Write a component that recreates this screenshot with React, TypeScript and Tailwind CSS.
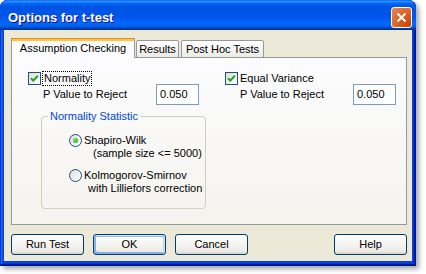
import type { ReactNode } from 'react';

const font = { fontFamily: '"Liberation Sans", Arial, sans-serif' };

function Checkbox({ checked }: { checked: boolean }) {
  return (
    <span className="flex h-[13px] w-[13px] shrink-0 items-center justify-center border border-[#1C5180] bg-[linear-gradient(135deg,#DCDCD7,#ffffff)]">
      {checked && (
        <svg width="11" height="11" viewBox="0 0 11 11">
          <path d="M2 5.2 L4.3 7.6 L8.8 2.8" fill="none" stroke="#21A121" strokeWidth="2" />
        </svg>
      )}
    </span>
  );
}

function Radio({ checked }: { checked: boolean }) {
  return (
    <span className="flex h-[13px] w-[13px] shrink-0 items-center justify-center rounded-full border border-[#1C5180] bg-[linear-gradient(135deg,#DCDCD7,#ffffff)]">
      {checked && (
        <span className="h-[5px] w-[5px] rounded-full bg-[radial-gradient(circle_at_35%_35%,#7BE05A,#21A121)]" />
      )}
    </span>
  );
}

function PValue() {
  return (
    <div className="-mt-[1px] flex items-center">
      <span className="w-[128px] shrink-0 pl-[15px]">P Value to Reject</span>
      <div className="flex h-[21px] w-[43px] items-center border border-[#7F9DB9] bg-white pl-[3px]">
        0.050
      </div>
    </div>
  );
}

function Button({ children, primary }: { children: ReactNode; primary?: boolean }) {
  return (
    <button
      className={
        'flex h-[21px] w-[73px] items-center justify-center rounded-[3px] border border-[#003C74] bg-[linear-gradient(180deg,#ffffff,#ECEBE6_86%,#D6D0C5)] text-black ' +
        (primary
          ? 'shadow-[inset_-1px_1px_#cee7ff,inset_1px_2px_#98b8ea,inset_-2px_2px_#bcd4f6,inset_1px_-1px_#89ade4,inset_2px_-2px_#89ade4]'
          : '')
      }
    >
      {children}
    </button>
  );
}

export default function App() {
  return (
    <div className="h-[274px] w-[426px] bg-white text-[11px] leading-[13px] text-black" style={font}>
      <div className="flex h-[266px] w-[416px] flex-col rounded-t-[8px] bg-[#0842D9] shadow-[inset_-1px_-1px_#00138c,inset_1px_1px_#0831d9,inset_-2px_-2px_#001ea0,inset_2px_2px_#166aee,inset_-3px_-3px_#003bda,inset_3px_3px_#0855dd,3px_3px_5px_rgba(0,0,0,0.35)]">
        <div className="flex h-[30px] shrink-0 items-center rounded-t-[8px] bg-[linear-gradient(180deg,#0058EE_0%,#3593FF_4%,#288EFF_6%,#127DFF_8%,#036FFC_10%,#0262EE_14%,#0057E5_20%,#0054E3_24%,#0055EB_56%,#005BF5_66%,#026AFE_76%,#0062EF_86%,#0052D6_92%,#0040AB_94%,#003092_100%)] pl-[8px] pr-[4px] pt-[4px]">
          <span className="text-[13px] font-bold text-white [text-shadow:1px_1px_#0F1089]">Options for t-test</span>
          <div className="ml-auto flex h-[21px] w-[21px] items-center justify-center rounded-[3px] border border-white bg-[radial-gradient(circle_at_90%_90%,#CC4600,#DC6527_55%,#E58A64)]">
            <svg width="11" height="11" viewBox="0 0 11 11">
              <path d="M1.5 1.5 L9.5 9.5 M9.5 1.5 L1.5 9.5" stroke="white" strokeWidth="2" />
            </svg>
          </div>
        </div>

        <div className="mx-[4px] mb-[5px] flex flex-1 flex-col bg-[#ECE9D8] pl-[7px] pr-[5px] pt-[8px]">
          <div className="flex h-[20px] items-end">
            <div className="relative z-10 flex h-[20px] w-[124px] items-center justify-center border border-b-0 border-[#919B9C] border-t-[#E68B2C] bg-[#FCFCFE] pb-[1px] shadow-[inset_0_2px_#FFC83C]">
              Assumption Checking
            </div>
            <div className="ml-[1px] flex h-[18px] w-[43px] items-center justify-center rounded-t-[2px] border border-[#919B9C] bg-[linear-gradient(180deg,#ffffff,#ECEBE6)]">
              Results
            </div>
            <div className="ml-[2px] flex h-[18px] w-[83px] items-center justify-center rounded-t-[2px] border border-[#919B9C] bg-[linear-gradient(180deg,#ffffff,#ECEBE6)]">
              Post Hoc Tests
            </div>
          </div>

          <div className="-mt-[1px] flex h-[168px] border border-[#919B9C] bg-[linear-gradient(180deg,#FCFCFE,#F4F3EE)] pl-[16px] pt-[14px]">
            <div className="flex w-[197px] flex-col">
              <div className="flex h-[13px] items-center">
                <Checkbox checked />
                <span className="ml-[1px] border border-dotted border-black px-[1px]">Normality</span>
              </div>
              <PValue />
              <fieldset className="ml-[13px] mt-[5px] h-[99px] w-[165px] rounded-[4px] border border-[#D0D0BF] p-0">
                <legend className="ml-[6px] px-[2px] text-[#0046D5]">Normality Statistic</legend>
                <div className="flex flex-col pl-[27px] pt-[11px]">
                  <div className="flex gap-[2px]">
                    <Radio checked />
                    <div className="flex flex-col">
                      <span>Shapiro-Wilk</span>
                      <span className="pl-[9px]">(sample size &lt;= 5000)</span>
                    </div>
                  </div>
                  <div className="mt-[9px] flex gap-[2px]">
                    <Radio checked={false} />
                    <div className="flex flex-col">
                      <span>Kolmogorov-Smirnov</span>
                      <span className="pl-[4px]">with Lilliefors correction</span>
                    </div>
                  </div>
                </div>
              </fieldset>
            </div>
            <div className="flex flex-col">
              <div className="flex h-[13px] items-center">
                <Checkbox checked />
                <span className="ml-[2px]">Equal Variance</span>
              </div>
              <PValue />
            </div>
          </div>

          <div className="mt-[9px] flex gap-[9px]">
            <Button>Run Test</Button>
            <Button primary>OK</Button>
            <Button>Cancel</Button>
            <div className="ml-auto">
              <Button>Help</Button>
            </div>
          </div>
        </div>
      </div>
    </div>
  );
}
